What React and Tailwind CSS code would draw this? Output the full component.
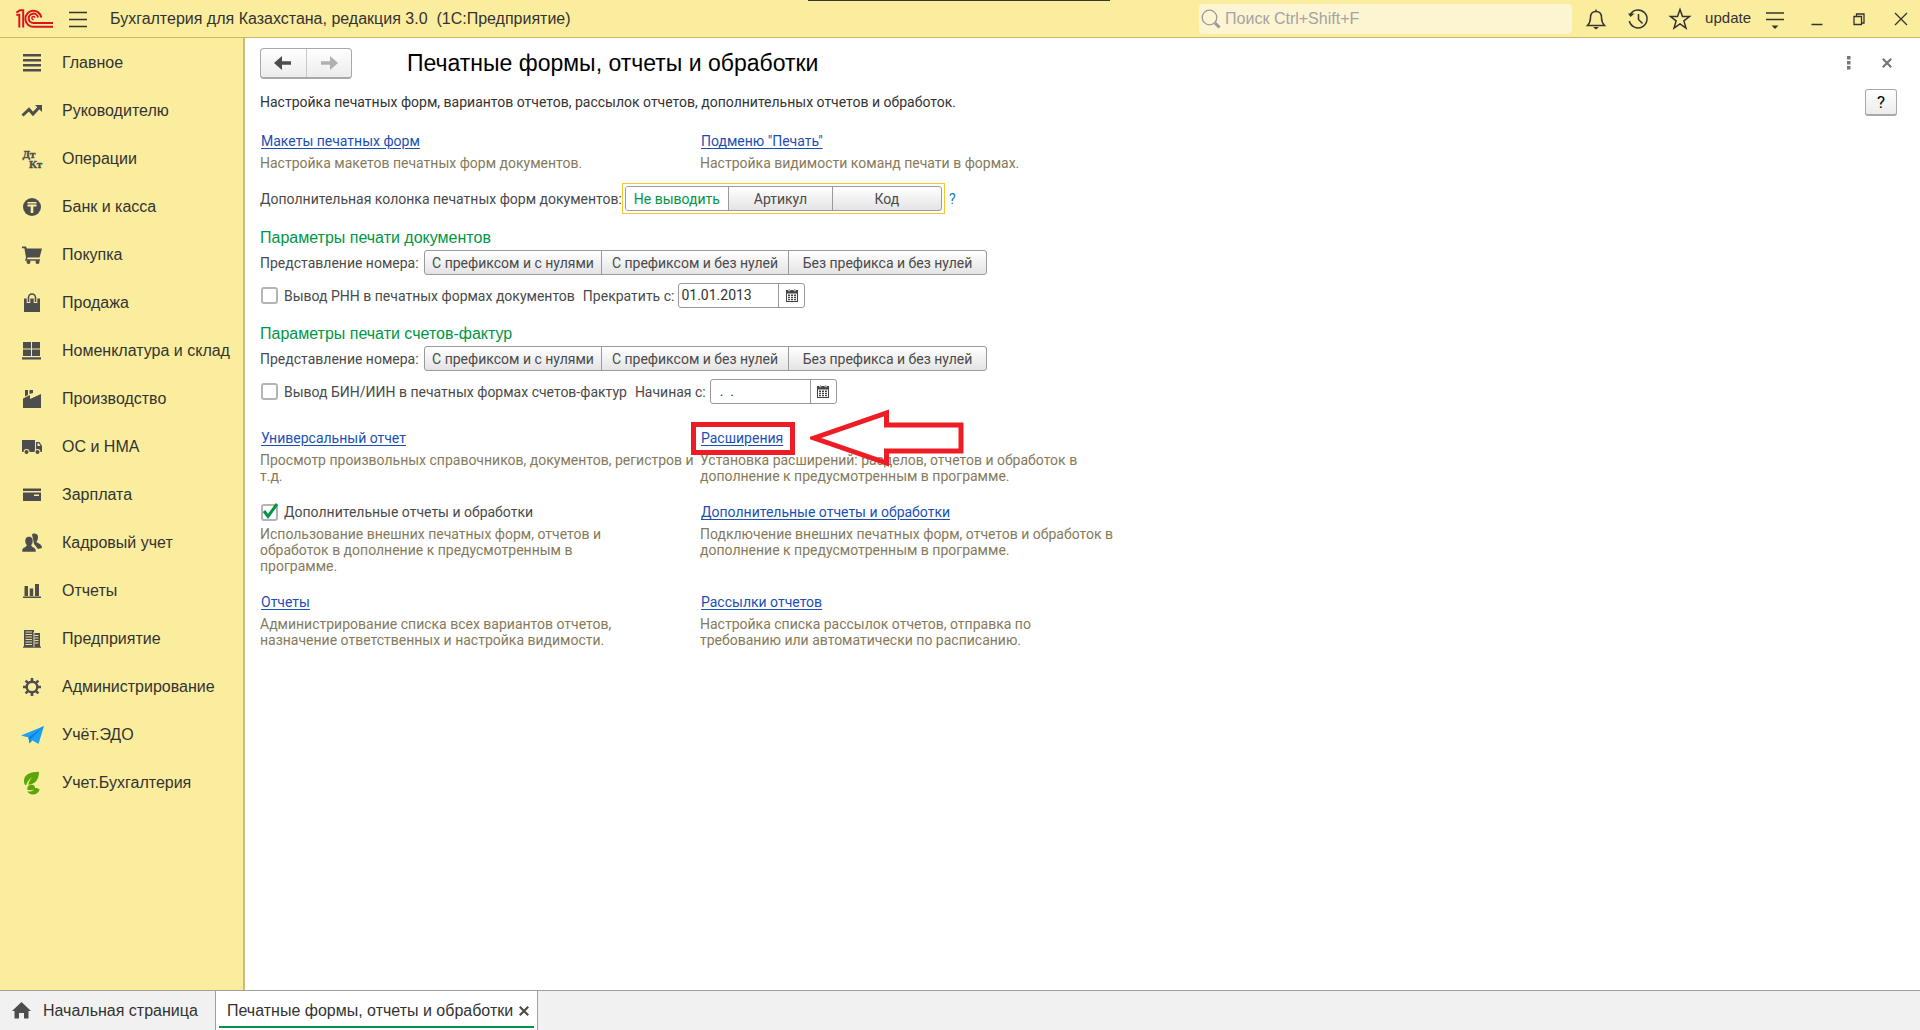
const ICON = "h-5 w-6 shrink-0 text-[#4d4d4d]";

function Icon({ children, className = ICON }) {
  return (
    <svg viewBox="0 0 24 20" className={className} fill="currentColor" aria-hidden="true">
      {children}
    </svg>
  );
}

const NAV = [
  ["Главное", <Icon><path d="M3 1h18v2.4H3zM3 6h18v2.4H3zM3 11h18v2.4H3zM3 16h18v2.4H3z" /></Icon>],
  ["Руководителю", <Icon><path d="M2.5 14.5 9 8.5l4 4.5 6-6.5" fill="none" stroke="currentColor" strokeWidth="3" /><path d="M15 4h7v7z" /></Icon>],
  ["Операции", (
    <Icon>
      <text x="2.5" y="9" fontSize="11" fontWeight="700" fontFamily="Liberation Serif, serif" stroke="currentColor" strokeWidth=".4">Дт</text>
      <text x="9" y="19" fontSize="11" fontWeight="700" fontFamily="Liberation Serif, serif" stroke="currentColor" strokeWidth=".4">Кт</text>
    </Icon>
  )],
  ["Банк и касса", <Icon><circle cx="12" cy="10" r="9" /><path d="M7.5 5h9v1.400h-9zM7.5 7.400h9v2.200h-3.200v6.400h-2.600v-6.400H7.500z" fill="#fbed9e" /></Icon>],
  ["Покупка", <Icon><path d="M2 1.5h4l.8 2H22l-2.4 9H7.6l-.7 1.7H20v1.6H5L6 12.5 4.4 3.3H2z" /><circle cx="8.5" cy="17" r="2" /><circle cx="17.5" cy="17" r="2" /></Icon>],
  ["Продажа", <Icon><path d="M4 5.5h16V19H4z" /><path d="M8.5 10V5a3.5 3.5 0 0 1 7 0v5" fill="none" stroke="#fbed9e" strokeWidth="3.6" /><path d="M8.5 9V4.5a3.5 3.5 0 0 1 7 0V9" fill="none" stroke="currentColor" strokeWidth="1.6" /></Icon>],
  ["Номенклатура и склад", <Icon><path d="M3 1h8v6.5H3zM12 1h8v6.5h-8zM3 8.5h8V15H3zM12 8.5h8V15h-8zM2 16.3h19v2.2H2z" /></Icon>],
  ["Производство", <Icon><path d="M3 19V9.500l7-3.500v4l11-5v14zM5 1h3v5L5 7.500zM9.500 1H13v3L9.500 5z" /></Icon>],
  ["ОС и НМА", <Icon><path d="M2 3h13v12H2zM16 5h3.500L22 9v6h-6z" /><path d="M17.500 6.300H19l1.400 2.700h-2.900z" fill="#fbed9e" /><circle cx="6.5" cy="15" r="3" fill="#fbed9e" /><circle cx="17.5" cy="15" r="3" fill="#fbed9e" /><circle cx="6.5" cy="15" r="2" /><circle cx="17.5" cy="15" r="2" /></Icon>],
  ["Зарплата", <Icon><path d="M3 3.500h18V6H3zM3 7.500h18V16H3z" /><path d="M14 9.500h5v1.500h-5z" fill="#fbed9e" /></Icon>],
  ["Кадровый учет", <Icon><path d="M12 1.500c1-1.500 6-1.500 6 2.500 0 2-.6 3.500-1.500 4.500 0 2 5.500 1.500 5.500 6.500l-4 1-4-5z" /><path d="M2 19c-.5-6 4.500-4 4.500-7C5.500 11 5 9.500 5 7.500c0-5.500 8-5.500 8 0 0 2-.5 3.500-1.500 4.500 0 3 5 1 4.500 7z" stroke="#fbed9e" strokeWidth=".5" /></Icon>],
  ["Отчеты", <Icon><path d="M3 15.500h18V17H3zM4.500 5H8v10H4.500zM9.700 7.500h3.500V15H9.700zM15 3h4v12h-4z" /></Icon>],
  ["Предприятие", <Icon><path d="M4 1h10v17H4zM14 4h6v14h-6zM3 17.500h18v1.300H3z" /><path d="M5.500 3h6.500M5.500 5.500h6.500M5.500 8h6.500M5.500 10.500h6.500M5.500 13h6.500M5.500 15.500h6.500M14.500 6.500h4M14.500 9h4M14.500 11.500h4M14.500 14h4M14 3v15" stroke="#fbed9e" strokeWidth=".9" /></Icon>],
  ["Администрирование", (
    <Icon>
      <circle cx="12" cy="10" r="5.300" fill="none" stroke="currentColor" strokeWidth="2.400" />
      <path d="M12 1v4M12 15v4M3 10h4M17 10h4M5.600 3.600l2.600 2.600M15.800 13.800l2.600 2.600M5.600 16.400l2.600-2.600M15.800 6.200l2.600-2.600" stroke="currentColor" strokeWidth="2.600" />
    </Icon>
  )],
  ["Учёт.ЭДО", <Icon><path d="M1 10.500 24 1l-5.500 18-6-3.500-3 3-1-6z" fill="#1da1f7" /><path d="M8.500 12.500 24 1 11 14l-1.500 4.500z" fill="#0b83dc" /></Icon>],
  ["Учет.Бухгалтерия", (
    <svg viewBox="0 0 24 24" className="h-6 w-6 shrink-0" fill="#5aa50a" aria-hidden="true">
      <path d="M19 .8C10 .8 4 3.500 4 10c0 2.200.5 3.500 2 4.500.8-3 3-6.200 6-8.500-2 3-3.300 5-3.800 7.700C14.500 13.500 19 9.500 19 .8z" />
      <path d="M10.500 13.800c4-.3 4.500 1.700 4.500 3.200 1.500-.4 3.300.2 4.700 1.500-1.200 3.200-3.700 5-6.700 5-2.800 0-5-1.200-5.700-3.200 3 .6 5.500-.3 6.700-2.100-1.500.9-4 1.300-6.700.5-.3-2.300.7-4.200 3.200-4.900z" />
    </svg>
  )],
];

function LineIcon({ children, className = "size-6" }) {
  return (
    <svg viewBox="0 0 24 24" className={className} fill="none" stroke="#333" strokeWidth="1.500" aria-hidden="true">
      {children}
    </svg>
  );
}

function Header() {
  return (
    <header className="relative flex h-[38px] shrink-0 items-center border-b border-[#cbb866] bg-[#fbed9e] pl-4 text-[16px] text-[#333]">
      <div className="absolute top-0 left-[808px] h-px w-[302px] bg-[#3a3830]" />
      <svg viewBox="0 0 38 20" className="h-5 w-[38px]" fill="none" stroke="#d9141e" strokeWidth="2" role="img" aria-label="1С">
        <path d="M.3 5.800h3V18.500M.3 3h1L3.800 1.300h3.400v17.200" />
        <path d="M25.300 8.500A8 8 0 1 0 17.500 17.800H37M22 8.500A4.700 4.700 0 1 0 17.500 14H37" />
        <path d="M19 8.700a1.600 1.600 0 1 0-1.500 2" strokeWidth="1.400" />
      </svg>
      <button type="button" aria-label="Меню" className="ml-3 flex size-6 items-center justify-center">
        <LineIcon><path d="M3 5.500h18M3 12.500h18M3 19.500h18" /></LineIcon>
      </button>
      <h1 className="ml-5 whitespace-pre">Бухгалтерия для Казахстана, редакция 3.0  (1С:Предприятие)</h1>
      <label className="ml-auto flex h-[30px] w-[373px] items-center rounded-sm bg-[#fdf5d2] pl-0.5">
        <svg viewBox="0 0 20 20" className="size-5 shrink-0" fill="none" stroke="#999" strokeWidth="1.300" aria-hidden="true">
          <circle cx="8.5" cy="8.5" r="7.3" />
          <path d="m14 14 4.500 4.500" strokeWidth="3" />
        </svg>
        <input type="text" placeholder="Поиск Ctrl+Shift+F" aria-label="Поиск" className="ml-1 w-full min-w-0 bg-transparent outline-none placeholder:text-[#a3a3a3]" />
      </label>
      <div className="flex items-center gap-[18px] pl-3">
        <button type="button" aria-label="Уведомления">
          <LineIcon>
            <path d="M3.500 18.500h17c-2-2-3-3.500-3-8 0-3.500-2-6-5.500-6s-5.500 2.500-5.500 6c0 4.500-1 6-3 8zM12 4.500V2.500" />
            <path d="M9 20h6l-3 2.500z" fill="#333" stroke="none" />
          </LineIcon>
        </button>
        <button type="button" aria-label="История">
          <LineIcon>
            <path d="M4.500 7a9 9 0 1 1-1.200 7M12.500 7v5.500l4 4" />
            <path d="M2 6.500h6.500L4.500 10z" fill="#333" stroke="none" />
          </LineIcon>
        </button>
        <button type="button" aria-label="Избранное">
          <LineIcon><path d="m12 2.500 2.500 7h7l-5.600 4.400 2.100 7.300-6-4.200-6 4.200 2.100-7.300L2.500 9.500h7z" /></LineIcon>
        </button>
      </div>
      <button type="button" className="ml-[13px] text-[15px]">update</button>
      <button type="button" aria-label="Настройка" className="ml-3">
        <LineIcon>
          <path d="M3 6h18M3 12.500h18" />
          <path d="M8.500 18.500h7L12 22z" fill="#333" stroke="none" />
        </LineIcon>
      </button>
      <div className="flex items-center gap-[18px] pr-[7px] pl-[18px]">
        <button type="button" aria-label="Свернуть"><LineIcon><path d="M6.500 17.500h11" /></LineIcon></button>
        <button type="button" aria-label="Восстановить"><LineIcon><path d="M9.500 9.500V7h7.500v9h-2.500M7 9.500h7.500v8H7z" strokeWidth="1.300" /></LineIcon></button>
        <button type="button" aria-label="Закрыть"><LineIcon><path d="m6 6 12 12M18 6 6 18" strokeWidth="1.300" /></LineIcon></button>
      </div>
    </header>
  );
}

function Segments({ items, active }) {
  return (
    <div className="flex h-[25px] divide-x divide-[#9a9a9a] overflow-hidden rounded-[3px] border border-[#9a9a9a] bg-linear-to-b from-white to-[#e4e4e4]">
      {items.map(([text, width]) => (
        <button
          key={text}
          type="button"
          aria-pressed={text === active}
          className={`${width} whitespace-nowrap ${text === active ? "bg-white text-[#009646]" : ""}`}
        >
          {text}
        </button>
      ))}
    </div>
  );
}

const NUMBER_VIEWS = [
  ["С префиксом и с нулями", "w-[177px]"],
  ["С префиксом и без нулей", "w-[187px]"],
  ["Без префикса и без нулей", "w-[197px]"],
];

function Check({ id, label, checked }) {
  return (
    <div className="flex items-center gap-1.5 whitespace-nowrap">
      <span className="relative ml-px flex">
        <input
          id={id}
          type="checkbox"
          defaultChecked={checked}
          className="size-[17px] appearance-none rounded-[3px] border-2 border-[#b5b5b5] bg-white"
        />
        {checked && (
          <svg viewBox="0 0 17 17" className="pointer-events-none absolute inset-0 size-[17px] overflow-visible" fill="none" stroke="#009646" strokeWidth="3" aria-hidden="true">
            <path d="m3 7 4 5.500L16 0" />
          </svg>
        )}
      </span>
      <label htmlFor={id}>{label}</label>
    </div>
  );
}

function DateField({ id, label, value }) {
  return (
    <div className="flex items-center gap-1 whitespace-nowrap">
      <label htmlFor={id}>{label}</label>
      <div className="flex h-[25px] w-[127px] overflow-hidden rounded-[3px] border border-[#9a9a9a] bg-white">
        <input id={id} type="text" defaultValue={value} className="w-full min-w-0 pb-px pl-0.5 text-[#333] outline-none" />
        <button type="button" aria-label="Календарь" className="flex w-[26px] shrink-0 items-center justify-center border-l border-[#9a9a9a]">
          <svg viewBox="0 0 12 13" className="h-[13px] w-3" fill="#444" aria-hidden="true">
            <path d="M0 1h12v12H0z" />
            <path d="M1 4.500h10V12H1z" fill="#fff" />
            <path d="M2 5.500h2v1.500H2zM5 5.500h2v1.500H5zM8 5.500h2v1.500H8zM2 7.700h2v1.500H2zM5 7.700h2v1.500H5zM8 7.700h2v1.500H8zM2 9.900h2v1.300H2zM5 9.900h2v1.300H5zM8 9.900h2v1.300H8z" />
            <path d="M2.500 0h1.500v2H2.500zM8 0h1.500v2H8z" stroke="#fff" strokeWidth=".6" />
          </svg>
        </button>
      </div>
    </div>
  );
}

function Link({ children }) {
  return (
    <a href="#" className="ml-px whitespace-nowrap text-[#1c4fb5] underline underline-offset-2">
      {children}
    </a>
  );
}

function Hint({ lines }) {
  return (
    <p className="mt-1 leading-4 whitespace-pre-line text-[#857a5a]">{lines.join("\n")}</p>
  );
}

function PrintSection({ title, id, check, dateLabel, date }) {
  return (
    <section className="mb-3.5">
      <h3 className="text-[16px] leading-6 text-[#009646] font-['Liberation_Sans',Arial,sans-serif]">{title}</h3>
      <div className="flex items-center">
        <span className="w-[164px] whitespace-nowrap">Представление номера:</span>
        <Segments items={NUMBER_VIEWS} />
      </div>
      <div className="mt-2 flex items-center gap-2">
        <Check id={`${id}-check`} label={check} />
        <DateField id={`${id}-date`} label={dateLabel} value={date} />
      </div>
    </section>
  );
}

function Arrow() {
  return (
    <svg viewBox="0 0 154 58" className="pointer-events-none absolute top-[-12px] left-[119px] h-[58px] w-[154px] max-w-none" fill="none" stroke="#ee1c24" strokeWidth="5" aria-hidden="true">
      <path d="M4 29 76.500 4v12H151v26H76.500v12z" />
    </svg>
  );
}

function Content() {
  return (
    <main className="min-w-0 flex-1 overflow-hidden bg-white pt-2 pl-[15px] font-['Roboto','Open_Sans',sans-serif] text-[14px] leading-5 text-[#4a4a4a]">
      <div className="flex items-center pt-0.5 pr-[23px]">
        <div className="flex h-[31px] w-[92px] divide-x divide-[#c8c8c8] overflow-hidden rounded-sm border border-b-2 border-[#a8a8a8] bg-linear-to-b from-white to-[#ececec]">
          <button type="button" aria-label="Назад" className="flex flex-1 items-center justify-center">
            <svg viewBox="0 0 18 14" className="h-3.5 w-[18px]" fill="#4d4d4d" aria-hidden="true"><path d="M0 7 8 0v5.200h9v3.600H8V14z" /></svg>
          </button>
          <button type="button" aria-label="Вперед" className="flex flex-1 items-center justify-center">
            <svg viewBox="0 0 18 14" className="h-3.5 w-[18px]" fill="#b0b0b0" aria-hidden="true"><path d="M18 7 10 0v5.200H1v3.600h9V14z" /></svg>
          </button>
        </div>
        <h2 className="ml-[55px] pb-0.5 text-[23px] leading-7 text-black font-['Liberation_Sans',Arial,sans-serif]">Печатные формы, отчеты и обработки</h2>
        <button type="button" aria-label="Еще" className="ml-auto flex w-5 justify-center pb-0.5">
          <svg viewBox="0 0 4 14" className="h-3.5 w-1" fill="#777" aria-hidden="true"><path d="M0 0h3.500v3.500H0zM0 5h3.500v3.500H0zM0 10h3.500v3.500H0z" /></svg>
        </button>
        <button type="button" aria-label="Закрыть форму" className="ml-[18px] flex w-5 justify-center pb-0.5">
          <svg viewBox="0 0 10 10" className="size-2.5" stroke="#777" strokeWidth="2.200" aria-hidden="true"><path d="m.8.8 8.400 8.400M9.200.8.800 9.200" /></svg>
        </button>
      </div>

      <div className="mt-[9px] flex h-7 items-center justify-between pr-[23px]">
        <p className="text-[#333]">Настройка печатных форм, вариантов отчетов, рассылок отчетов, дополнительных отчетов и обработок.</p>
        <button type="button" aria-label="Справка" className="h-[27px] w-8 rounded-[3px] border border-b-2 border-[#a8a8a8] bg-linear-to-b from-white to-[#ececec] text-[17px] leading-5 text-black">?</button>
      </div>

      <div className="mt-[15px] grid grid-cols-[440px_1fr]">
        <div><Link>Макеты печатных форм</Link><Hint lines={["Настройка макетов печатных форм документов."]} /></div>
        <div><Link>Подменю "Печать"</Link><Hint lines={["Настройка видимости команд печати в формах."]} /></div>
      </div>

      <div className="mt-3 flex items-center">
        <span className="whitespace-nowrap">Дополнительная колонка печатных форм документов:</span>
        <div className="border border-[#f7c82a] p-0.5">
          <Segments items={[["Не выводить", "w-[103px]"], ["Артикул", "w-[104px]"], ["Код", "w-[108px]"]]} active="Не выводить" />
        </div>
        <button type="button" aria-label="Подсказка" className="ml-1 text-[#0b7bc4]">?</button>
      </div>

      <div className="mt-3">
        <PrintSection title="Параметры печати документов" id="docs" check="Вывод РНН в печатных формах документов" dateLabel="Прекратить с:" date="01.01.2013" />
        <PrintSection title="Параметры печати счетов-фактур" id="invoices" check="Вывод БИН/ИИН в печатных формах счетов-фактур" dateLabel="Начиная с:" date="  .  ." />
      </div>

      <div className="mt-6 grid grid-cols-[440px_1fr] gap-y-[18px]">
        <div>
          <Link>Универсальный отчет</Link>
          <Hint lines={["Просмотр произвольных справочников, документов, регистров и", "т.д."]} />
        </div>
        <div className="relative">
          <Link>Расширения</Link>
          <Hint lines={["Установка расширений: разделов, отчетов и обработок в", "дополнение к предусмотренным в программе."]} />
          <div className="pointer-events-none absolute top-[-6px] left-[-9px] h-[33px] w-[104px] border-5 border-[#ee1c24]" />
          <div className="absolute top-[-7px] left-[-9px]"><Arrow /></div>
        </div>
        <div>
          <Check id="extra" label="Дополнительные отчеты и обработки" checked />
          <Hint lines={["Использование внешних печатных форм, отчетов и", "обработок в дополнение к предусмотренным в", "программе."]} />
        </div>
        <div>
          <Link>Дополнительные отчеты и обработки</Link>
          <Hint lines={["Подключение внешних печатных форм, отчетов и обработок в", "дополнение к предусмотренным в программе."]} />
        </div>
        <div>
          <Link>Отчеты</Link>
          <Hint lines={["Администрирование списка всех вариантов отчетов,", "назначение ответственных и настройка видимости."]} />
        </div>
        <div>
          <Link>Рассылки отчетов</Link>
          <Hint lines={["Настройка списка рассылок отчетов, отправка по", "требованию или автоматически по расписанию."]} />
        </div>
      </div>
    </main>
  );
}

export default function App() {
  return (
    <div className="flex h-screen flex-col overflow-hidden bg-white font-['Liberation_Sans',Arial,sans-serif]">
      <Header />
      <div className="flex min-h-0 flex-1">
        <nav className="w-[245px] shrink-0 border-r-2 border-[#c9bb7a] bg-[#fbed9e] pt-px">
          <ul>
            {NAV.map(([label, icon]) => (
              <li key={label}>
                <a href="#" className="flex h-12 items-center gap-[18px] pl-5 text-[16px] whitespace-nowrap text-[#333]">
                  {icon}
                  {label}
                </a>
              </li>
            ))}
          </ul>
        </nav>
        <Content />
      </div>
      <footer className="flex h-10 shrink-0 border-t border-[#a0a0a0] bg-[#f1f1f1] text-[16px] text-[#333]">
        <button type="button" className="flex w-[215px] items-center gap-3 pl-3 whitespace-nowrap">
          <svg viewBox="0 0 19 17" className="h-[17px] w-[19px] shrink-0" fill="#4d4d4d" aria-hidden="true"><path d="M9.500 0 19 9h-2.500v7.500H12V11H7v5.500H2.500V9H0z" /></svg>
          Начальная страница
        </button>
        <div className="relative flex w-[323px] items-center border-x border-[#a0a0a0] bg-white pl-[11px]">
          <span className="whitespace-nowrap">Печатные формы, отчеты и обработки</span>
          <button type="button" aria-label="Закрыть вкладку" className="mr-2 ml-auto">
            <svg viewBox="0 0 10 10" className="size-2.5" stroke="#4d4d4d" strokeWidth="2.200" aria-hidden="true"><path d="m.8.8 8.400 8.400M9.200.8.800 9.200" /></svg>
          </button>
          <div className="absolute inset-x-[3px] bottom-0.5 h-0.5 bg-[#009646]" />
        </div>
      </footer>
    </div>
  );
}
